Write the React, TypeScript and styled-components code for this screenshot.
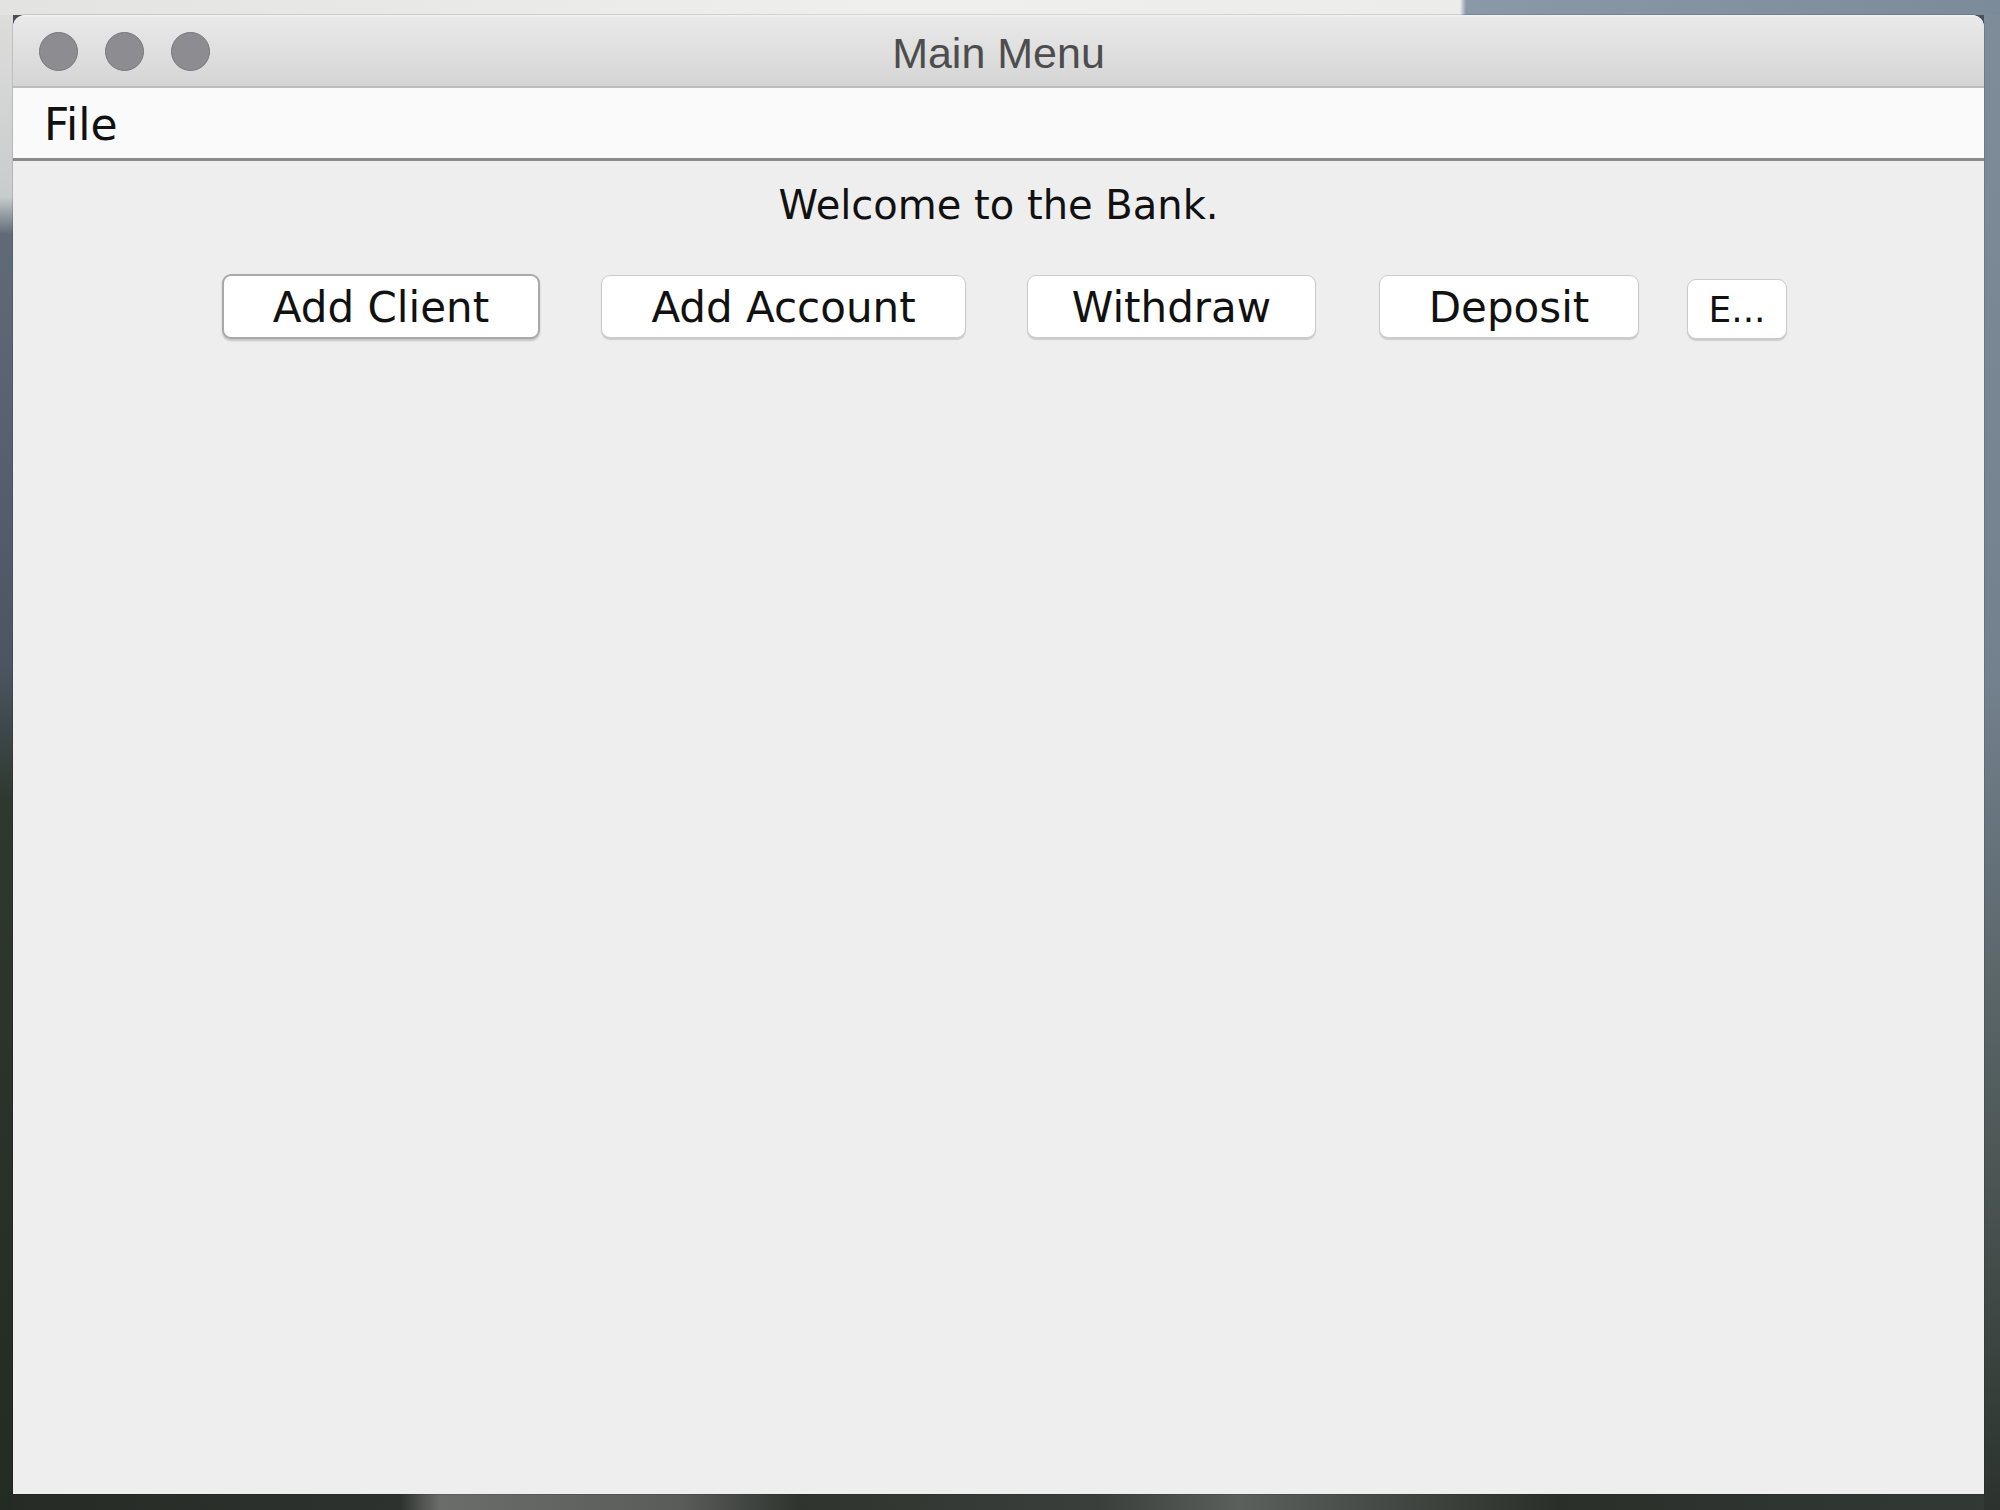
import React from "react";
import styled, { createGlobalStyle, css } from "styled-components";

const Global = createGlobalStyle`
  html, body { margin: 0; padding: 0; }
  body { width: 2000px; height: 1510px; overflow: hidden; }
  * { box-sizing: border-box; }
`;

const Desktop = styled.div`
  width: 2000px;
  height: 1510px;
  padding: 15px 16px 16px 13px;
  display: flex;
  background:
    linear-gradient(to right, #e3e3e2 0%, #efefed 45%, #ececeb 73%, #8a99a8 73.3%, #7c8b9a 100%) top / 100% 15px no-repeat,
    linear-gradient(to bottom, #7f8d9b 0%, #73818e 45%, #4b5553 78%, #2c332e 100%) right / 16px 100% no-repeat,
    linear-gradient(to bottom, #dededc 0, #c9cccd 13%, #5f6c78 15.5%, #4b5663 44%, #2f382f 53%, #242a24 100%) left / 13px 100% no-repeat,
    linear-gradient(to right, #262b26 0, #2e322e 20%, #6b6d6a 22%, #5a5c59 34%, #2f342f 40%, #3b3f3b 55%, #5b605c 62%, #2a2f2a 78%, #333a35 100%) bottom / 100% 16px no-repeat,
    #4a5258;
`;

const Window = styled.div`
  flex: 1;
  display: flex;
  flex-direction: column;
  background: #eeeeee;
  border-radius: 12px 12px 0 0;
  overflow: hidden;
  box-shadow: 0 0 0 1px rgba(0, 0, 0, 0.12);
`;

const TitleBar = styled.div`
  position: relative;
  height: 73px;
  flex: none;
  display: flex;
  align-items: center;
  padding: 2px 0 0 26px;
  gap: 27px;
  background: linear-gradient(to bottom, #f3f3f3 0, #e9e9e9 3px, #d5d5d5 100%);
  border-bottom: 2px solid #bdbdbd;
`;

const Light = styled.span`
  width: 39px;
  height: 39px;
  border-radius: 50%;
  background: #8d8c91;
  border: 1.5px solid #78777c;
  flex: none;
`;

const Title = styled.div`
  position: absolute;
  left: 0;
  right: 0;
  top: 0;
  bottom: 0;
  display: flex;
  align-items: center;
  justify-content: center;
  padding-top: 5px;
  font-family: "Liberation Sans", Arial, sans-serif;
  font-size: 43px;
  color: #4d4d4d;
  pointer-events: none;
`;

const MenuBar = styled.div`
  height: 73px;
  flex: none;
  display: flex;
  align-items: center;
  padding-left: 31px;
  background: #fafafa;
  border-bottom: 3px solid #8a8a8a;
`;

const MenuItem = styled.span`
  font-family: "DejaVu Sans", "Lucida Grande", sans-serif;
  font-size: 44px;
  color: #111;
  line-height: 1;
  padding-top: 3px;
`;

const Content = styled.div`
  flex: 1;
  display: flex;
  flex-direction: column;
  align-items: stretch;
  padding-top: 24px;
`;

const Welcome = styled.div`
  text-align: center;
  font-family: "DejaVu Sans", "Lucida Grande", sans-serif;
  font-size: 40px;
  color: #111;
  line-height: 40px;
  height: 40px;
`;

const ButtonRow = styled.div`
  display: flex;
  align-items: center;
  gap: 61px;
  padding-left: 209px;
  margin-top: 49px;
`;

const Button = styled.button<{ $w: number; $default?: boolean; $ml?: number }>`
  width: ${(p) => p.$w}px;
  height: 63px;
  margin-left: ${(p) => p.$ml ?? 0}px;
  flex: none;
  display: flex;
  align-items: center;
  justify-content: center;
  padding: 1px 0 0;
  background: #ffffff;
  border: 1.5px solid #cbcbcb;
  border-radius: 9px;
  box-shadow: 0 1.5px 1px rgba(0, 0, 0, 0.14);
  font-family: "DejaVu Sans", "Lucida Grande", sans-serif;
  font-size: 42px;
  color: #111;
  white-space: nowrap;
  overflow: hidden;
  ${(p) =>
    p.$default &&
    css`
      height: 65px;
      border: 2.5px solid #a9a9a9;
      box-shadow: 0 2px 2px rgba(0, 0, 0, 0.18);
    `}
`;

const SmallButton = styled(Button)`
  height: 60px;
  font-size: 36px;
  margin-top: 4px;
`;

export default function App() {
  return (
    <>
      <Global />
      <Desktop>
        <Window>
          <TitleBar>
            <Light />
            <Light />
            <Light />
            <Title>Main Menu</Title>
          </TitleBar>
          <MenuBar>
            <MenuItem>File</MenuItem>
          </MenuBar>
          <Content>
            <Welcome>Welcome to the Bank.</Welcome>
            <ButtonRow>
              <Button $w={318} $default>
                Add Client
              </Button>
              <Button $w={365}>Add Account</Button>
              <Button $w={289}>Withdraw</Button>
              <Button $w={260} $ml={2}>
                Deposit
              </Button>
              <SmallButton $w={100} $ml={-13}>
                E...
              </SmallButton>
            </ButtonRow>
          </Content>
        </Window>
      </Desktop>
    </>
  );
}
